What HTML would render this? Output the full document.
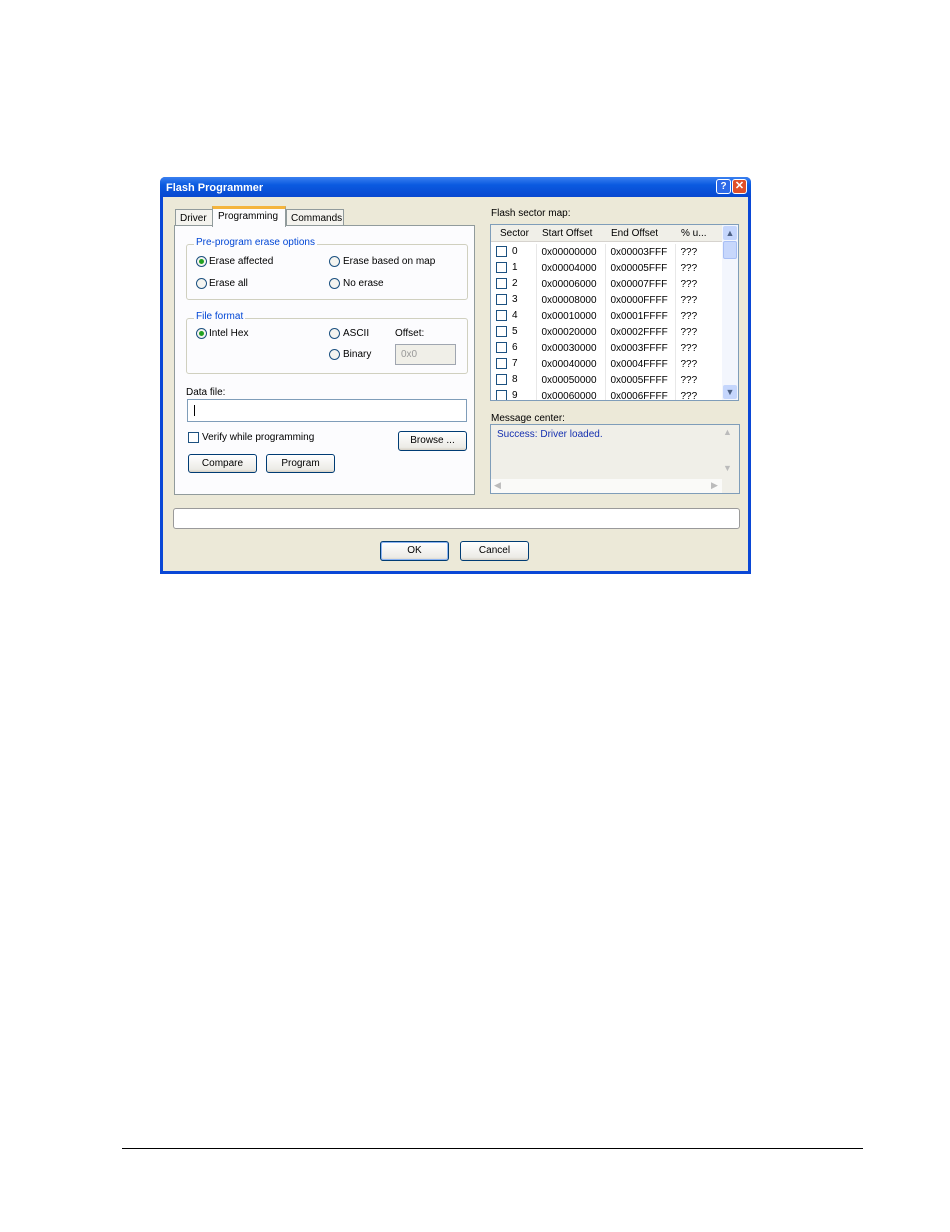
<!DOCTYPE html>
<html><head><meta charset="utf-8"><style>
*{box-sizing:border-box;margin:0;padding:0}
body{width:950px;height:1232px;background:#fff;position:relative;font-family:"Liberation Sans",sans-serif;font-size:10px;color:#000;overflow:hidden}
.a{position:absolute}
.win{left:160px;top:177px;width:591px;height:397px;background:#0a47d6;border-radius:5px 5px 0 0}
.title{left:0;top:0;width:591px;height:20px;background:linear-gradient(#3a80f0,#0a5ae0 40%,#0848d0);border-radius:5px 5px 0 0;color:#fff;font-weight:bold;font-size:11px;padding:5px 6px}
.body{left:3px;top:20px;width:585px;height:374px;background:#ece9d8}
.panel{background:#fcfcfe;border:1px solid #919b9c}
.grp{border:1px solid #d0d0bf;border-radius:3px}
.leg{background:#fcfcfe;color:#0046d5;padding:0 2px}
.rad{width:11px;height:11px;border:1px solid #1c5180;border-radius:50%;background:#f4f4f0}
.rad.on::after{content:"";position:absolute;left:2px;top:2px;width:5px;height:5px;border-radius:50%;background:#21a121}
.btn{border:1px solid #003c74;border-radius:3px;background:linear-gradient(#fff,#ecebe6 85%,#d6d0c5);text-align:center;line-height:17px}
.inp{background:#fff;border:1px solid #7f9db9}
.cb{width:11px;height:11px;border:1px solid #1c5180;background:#fff}
table{border-collapse:collapse;font-size:10px}
td{height:16px;padding-left:5px;border-right:1px solid #e8e8e8;white-space:nowrap}
.s{display:inline-block;width:11px;height:11px;border:1px solid #1c5180;vertical-align:middle;margin-right:5px}
</style></head><body>
<div class="a win">
<div class="a title">Flash Programmer</div>
<div class="a" style="left:556px;top:2px;width:15px;height:15px;background:#2d6ae8;border:1px solid #fff;border-radius:3px;color:#fff;font-weight:bold;text-align:center;font-size:10px;line-height:13px">?</div>
<div class="a" style="left:572px;top:2px;width:15px;height:15px;background:#e0502a;border:1px solid #fff;border-radius:3px;color:#fff;font-weight:bold;text-align:center;font-size:11px;line-height:13px">✕</div>
<div class="a body">
 <div class="a" style="left:12px;top:12px;width:38px;height:17px;border:1px solid #919b9c;border-bottom:none;background:#f4f3ee;padding:3px 4px">Driver</div>
 <div class="a" style="left:123px;top:12px;width:58px;height:17px;border:1px solid #919b9c;border-bottom:none;background:#f4f3ee;padding:3px 4px">Commands</div>
 <div class="a panel" style="left:11px;top:28px;width:301px;height:270px"></div>
 <div class="a" style="left:49px;top:9px;width:74px;height:21px;border:1px solid #919b9c;border-top:3px solid #f4b43c;border-bottom:none;background:#fcfcfe;padding:2px 5px">Programming</div>
 <div class="a grp" style="left:23px;top:47px;width:282px;height:56px"></div>
 <div class="a leg" style="left:31px;top:40px">Pre-program erase options</div>
 <div class="a rad on" style="left:33px;top:59px"></div><div class="a" style="left:46px;top:59px">Erase affected</div>
 <div class="a rad" style="left:166px;top:59px"></div><div class="a" style="left:180px;top:59px">Erase based on map</div>
 <div class="a rad" style="left:33px;top:81px"></div><div class="a" style="left:46px;top:81px">Erase all</div>
 <div class="a rad" style="left:166px;top:81px"></div><div class="a" style="left:180px;top:81px">No erase</div>
 <div class="a grp" style="left:23px;top:121px;width:282px;height:56px"></div>
 <div class="a leg" style="left:31px;top:114px">File format</div>
 <div class="a rad on" style="left:33px;top:131px"></div><div class="a" style="left:46px;top:131px">Intel Hex</div>
 <div class="a rad" style="left:166px;top:131px"></div><div class="a" style="left:180px;top:131px">ASCII</div>
 <div class="a" style="left:232px;top:131px">Offset:</div>
 <div class="a rad" style="left:166px;top:152px"></div><div class="a" style="left:180px;top:152px">Binary</div>
 <div class="a" style="left:232px;top:147px;width:61px;height:21px;border:1px solid #a0a6b0;background:#f0efe8;color:#999;padding:4px 5px">0x0</div>
 <div class="a" style="left:23px;top:190px">Data file:</div>
 <div class="a inp" style="left:24px;top:202px;width:280px;height:23px"><div class="a" style="left:6px;top:5px;width:1px;height:11px;background:#000"></div></div>
 <div class="a cb" style="left:25px;top:235px"></div><div class="a" style="left:39px;top:235px">Verify while programming</div>
 <div class="a btn" style="left:235px;top:234px;width:69px;height:20px">Browse ...</div>
 <div class="a btn" style="left:25px;top:257px;width:69px;height:19px">Compare</div>
 <div class="a btn" style="left:103px;top:257px;width:69px;height:19px">Program</div>
 <div class="a" style="left:328px;top:11px">Flash sector map:</div>
 <div class="a" style="left:327px;top:27px;width:249px;height:177px;border:1px solid #7f9db9;background:#fff;overflow:hidden">
  <div class="a" style="left:0;top:0;width:231px;height:17px;background:#f0efe8;border-bottom:1px solid #d6d3ce"></div>
  <div class="a" style="left:9px;top:3px">Sector</div><div class="a" style="left:51px;top:3px">Start Offset</div><div class="a" style="left:120px;top:3px">End Offset</div><div class="a" style="left:190px;top:3px">% u...</div>
  <table class="a" style="left:0;top:19px">
  <tr><td style="width:45px"><span class="s"></span>0</td><td style="width:69px">0x00000000</td><td style="width:70px">0x00003FFF</td><td style="width:47px">???</td></tr>
  <tr><td><span class="s"></span>1</td><td>0x00004000</td><td>0x00005FFF</td><td>???</td></tr>
  <tr><td><span class="s"></span>2</td><td>0x00006000</td><td>0x00007FFF</td><td>???</td></tr>
  <tr><td><span class="s"></span>3</td><td>0x00008000</td><td>0x0000FFFF</td><td>???</td></tr>
  <tr><td><span class="s"></span>4</td><td>0x00010000</td><td>0x0001FFFF</td><td>???</td></tr>
  <tr><td><span class="s"></span>5</td><td>0x00020000</td><td>0x0002FFFF</td><td>???</td></tr>
  <tr><td><span class="s"></span>6</td><td>0x00030000</td><td>0x0003FFFF</td><td>???</td></tr>
  <tr><td><span class="s"></span>7</td><td>0x00040000</td><td>0x0004FFFF</td><td>???</td></tr>
  <tr><td><span class="s"></span>8</td><td>0x00050000</td><td>0x0005FFFF</td><td>???</td></tr>
  <tr><td><span class="s"></span>9</td><td>0x00060000</td><td>0x0006FFFF</td><td>???</td></tr>
  </table>
  <div class="a" style="left:231px;top:0;width:16px;height:175px;background:#f3f6fd"></div>
  <div class="a" style="left:232px;top:1px;width:14px;height:14px;background:#c5d6fc;border-radius:2px;color:#4d6185;text-align:center;font-size:9px;line-height:14px">▲</div>
  <div class="a" style="left:232px;top:16px;width:14px;height:18px;background:#c7d7fc;border:1px solid #a8bff5;border-radius:2px"></div>
  <div class="a" style="left:232px;top:160px;width:14px;height:14px;background:#c5d6fc;border-radius:2px;color:#4d6185;text-align:center;font-size:9px;line-height:14px">▼</div>
 </div>
 <div class="a" style="left:328px;top:216px">Message center:</div>
 <div class="a" style="left:327px;top:227px;width:250px;height:70px;border:1px solid #7f9db9;background:#f0efe8">
  <div class="a" style="left:6px;top:4px;color:#1530b0">Success: Driver loaded.</div>
  <div class="a" style="left:232px;top:2px;color:#bbb;font-size:9px">▲</div>
  <div class="a" style="left:232px;top:38px;color:#bbb;font-size:9px">▼</div>
  <div class="a" style="left:0;top:54px;width:231px;height:14px;background:#fafaf8"></div>
  <div class="a" style="left:3px;top:55px;color:#bbb;font-size:9px">◀</div>
  <div class="a" style="left:220px;top:55px;color:#bbb;font-size:9px">▶</div>
 </div>
 <div class="a" style="left:10px;top:311px;width:567px;height:21px;border:1px solid #9a9a9a;border-radius:3px;background:#fff"></div>
 <div class="a btn" style="left:217px;top:344px;width:69px;height:20px;box-shadow:inset 0 0 0 1px #8cb4f2">OK</div>
 <div class="a btn" style="left:297px;top:344px;width:69px;height:20px">Cancel</div>
</div>
</div>
<div class="a" style="left:122px;top:1148px;width:741px;height:1px;background:#000"></div>
</body></html>
